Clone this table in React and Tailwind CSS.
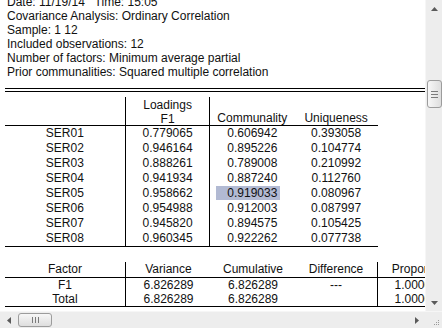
const HEADER_LINES = [
  'Date: 11/19/14   Time: 15:05',
  'Covariance Analysis: Ordinary Correlation',
  'Sample: 1 12',
  'Included observations: 12',
  'Number of factors: Minimum average partial',
  'Prior communalities: Squared multiple correlation',
]

const ROWS = [
  ['SER01', '0.779065', '0.606942', '0.393058'],
  ['SER02', '0.946164', '0.895226', '0.104774'],
  ['SER03', '0.888261', '0.789008', '0.210992'],
  ['SER04', '0.941934', '0.887240', '0.112760'],
  ['SER05', '0.958662', '0.919033', '0.080967'],
  ['SER06', '0.954988', '0.912003', '0.087997'],
  ['SER07', '0.945820', '0.894575', '0.105425'],
  ['SER08', '0.960345', '0.922262', '0.077738'],
]

const FACTORS = [
  ['F1', '6.826289', '6.826289', '---', '1.000000'],
  ['Total', '6.826289', '6.826289', '', '1.000000'],
]

function Arrow({ dir }) {
  const pts = {
    up: '0,4 3.5,0 7,4',
    down: '0,0 3.5,4 7,0',
    left: '4,0 0,3.5 4,7',
    right: '0,0 4,3.5 0,7',
  }[dir]
  const vertical = dir === 'up' || dir === 'down'
  return (
    <svg width={vertical ? 7 : 4} height={vertical ? 4 : 7}>
      <polygon points={pts} fill="#5a5a5a" />
    </svg>
  )
}

function Grip({ vertical }) {
  return (
    <div className={vertical ? 'flex flex-col gap-[2px]' : 'flex gap-[2px]'}>
      {[0, 1, 2].map(i => (
        <div key={i} className={vertical ? 'w-[7px] h-px bg-[#7b7b7b]' : 'w-px h-[6px] bg-[#7b7b7b]'} />
      ))}
    </div>
  )
}

function VScroll() {
  return (
    <div className="w-[17px] flex flex-col bg-[#ededed] border-l border-[#f6f6f6]">
      <div className="h-[17px] flex items-center justify-center"><Arrow dir="up" /></div>
      <div className="flex-1 flex flex-col">
        <div className="mt-[63px] ml-px w-[15px] h-[28px] rounded-[3px] border border-[#9c9c9c] bg-gradient-to-r from-[#f7f7f7] to-[#dedede] flex items-center justify-center">
          <Grip vertical />
        </div>
      </div>
      <div className="h-[17px] flex items-center justify-center"><Arrow dir="down" /></div>
    </div>
  )
}

function HScroll() {
  return (
    <div className="h-[17px] flex bg-[#ededed] border-t border-[#f6f6f6]">
      <div className="w-[17px] flex items-center justify-center"><Arrow dir="left" /></div>
      <div className="flex-1 flex items-center">
        <div className="ml-px w-[34px] h-[14px] rounded-[3px] border border-[#9c9c9c] bg-gradient-to-b from-[#f7f7f7] to-[#dedede] flex items-center justify-center">
          <Grip />
        </div>
      </div>
      <div className="w-[17px] flex items-center justify-center"><Arrow dir="right" /></div>
      <div className="w-[17px] flex items-end justify-end p-[3px]">
        <div className="grid grid-cols-3 gap-px">
          {[0, 0, 1, 0, 1, 1, 1, 1, 1].map((on, i) => (
            <div key={i} className={on ? 'w-px h-px bg-[#9a9a9a]' : 'w-px h-px'} />
          ))}
        </div>
      </div>
    </div>
  )
}

export default function App() {
  return (
    <div className="w-[442px] h-[328px] flex flex-col bg-white overflow-hidden text-[12px] text-[#111] font-['Liberation_Sans',Arial,sans-serif]">
      <div className="flex flex-1 min-h-0">
        <div className="flex-1 overflow-hidden">
          <div className="mt-[-5px] pl-[7px] leading-[14px] whitespace-pre">
            {HEADER_LINES.map(l => <div key={l}>{l}</div>)}
          </div>

          <div className="ml-[5px] mt-[9px] w-[480px] h-[4px] border-t border-b border-black" />

          {/* loadings table */}
          <div className="ml-[5px] mt-[5px] w-[373px]">
            <div className="flex h-[29px] border-b border-black leading-[14px]">
              <div className="w-[121px] border-r border-black" />
              <div className="w-[85px] border-r border-black flex flex-col items-center pt-px">
                <span>Loadings</span>
                <span>F1</span>
              </div>
              <div className="w-[84px] flex items-end justify-center">Communality</div>
              <div className="w-[84px] flex items-end justify-center">Uniqueness</div>
            </div>
            <div className="border-b border-black">
              {ROWS.map(([name, load, comm, uniq]) => (
                <div key={name} className="flex h-[15px] leading-[15px]">
                  <div className="w-[121px] border-r border-black text-center">{name}</div>
                  <div className="w-[85px] border-r border-black text-center">{load}</div>
                  <div className="w-[84px] relative text-center">
                    {name === 'SER05' && (
                      <div className="absolute left-[6px] top-0 w-[64px] h-[14px] bg-[#b2bad3]" />
                    )}
                    <span className="relative">{comm}</span>
                  </div>
                  <div className="w-[84px] text-center">{uniq}</div>
                </div>
              ))}
            </div>
          </div>

          {/* factor table */}
          <div className="ml-[5px] mt-[15px] w-[456px]">
            <div className="flex h-[16px] leading-[15px] border-b border-black">
              <div className="w-[121px] border-r border-black text-center">Factor</div>
              <div className="w-[85px] text-center">Variance</div>
              <div className="w-[84px] text-center">Cumulative</div>
              <div className="w-[83px] border-r border-black text-center">Difference</div>
              <div className="w-[83px] text-center">Proportion</div>
            </div>
            <div className="border-b border-black">
              {FACTORS.map(([f, v, c, d, p]) => (
                <div key={f} className="flex h-[14px] leading-[14px]">
                  <div className="w-[121px] border-r border-black text-center">{f}</div>
                  <div className="w-[85px] text-center">{v}</div>
                  <div className="w-[84px] text-center">{c}</div>
                  <div className="w-[83px] border-r border-black text-center">{d}</div>
                  <div className="w-[83px] text-center">{p}</div>
                </div>
              ))}
            </div>
          </div>
        </div>
        <VScroll />
      </div>
      <HScroll />
    </div>
  )
}
